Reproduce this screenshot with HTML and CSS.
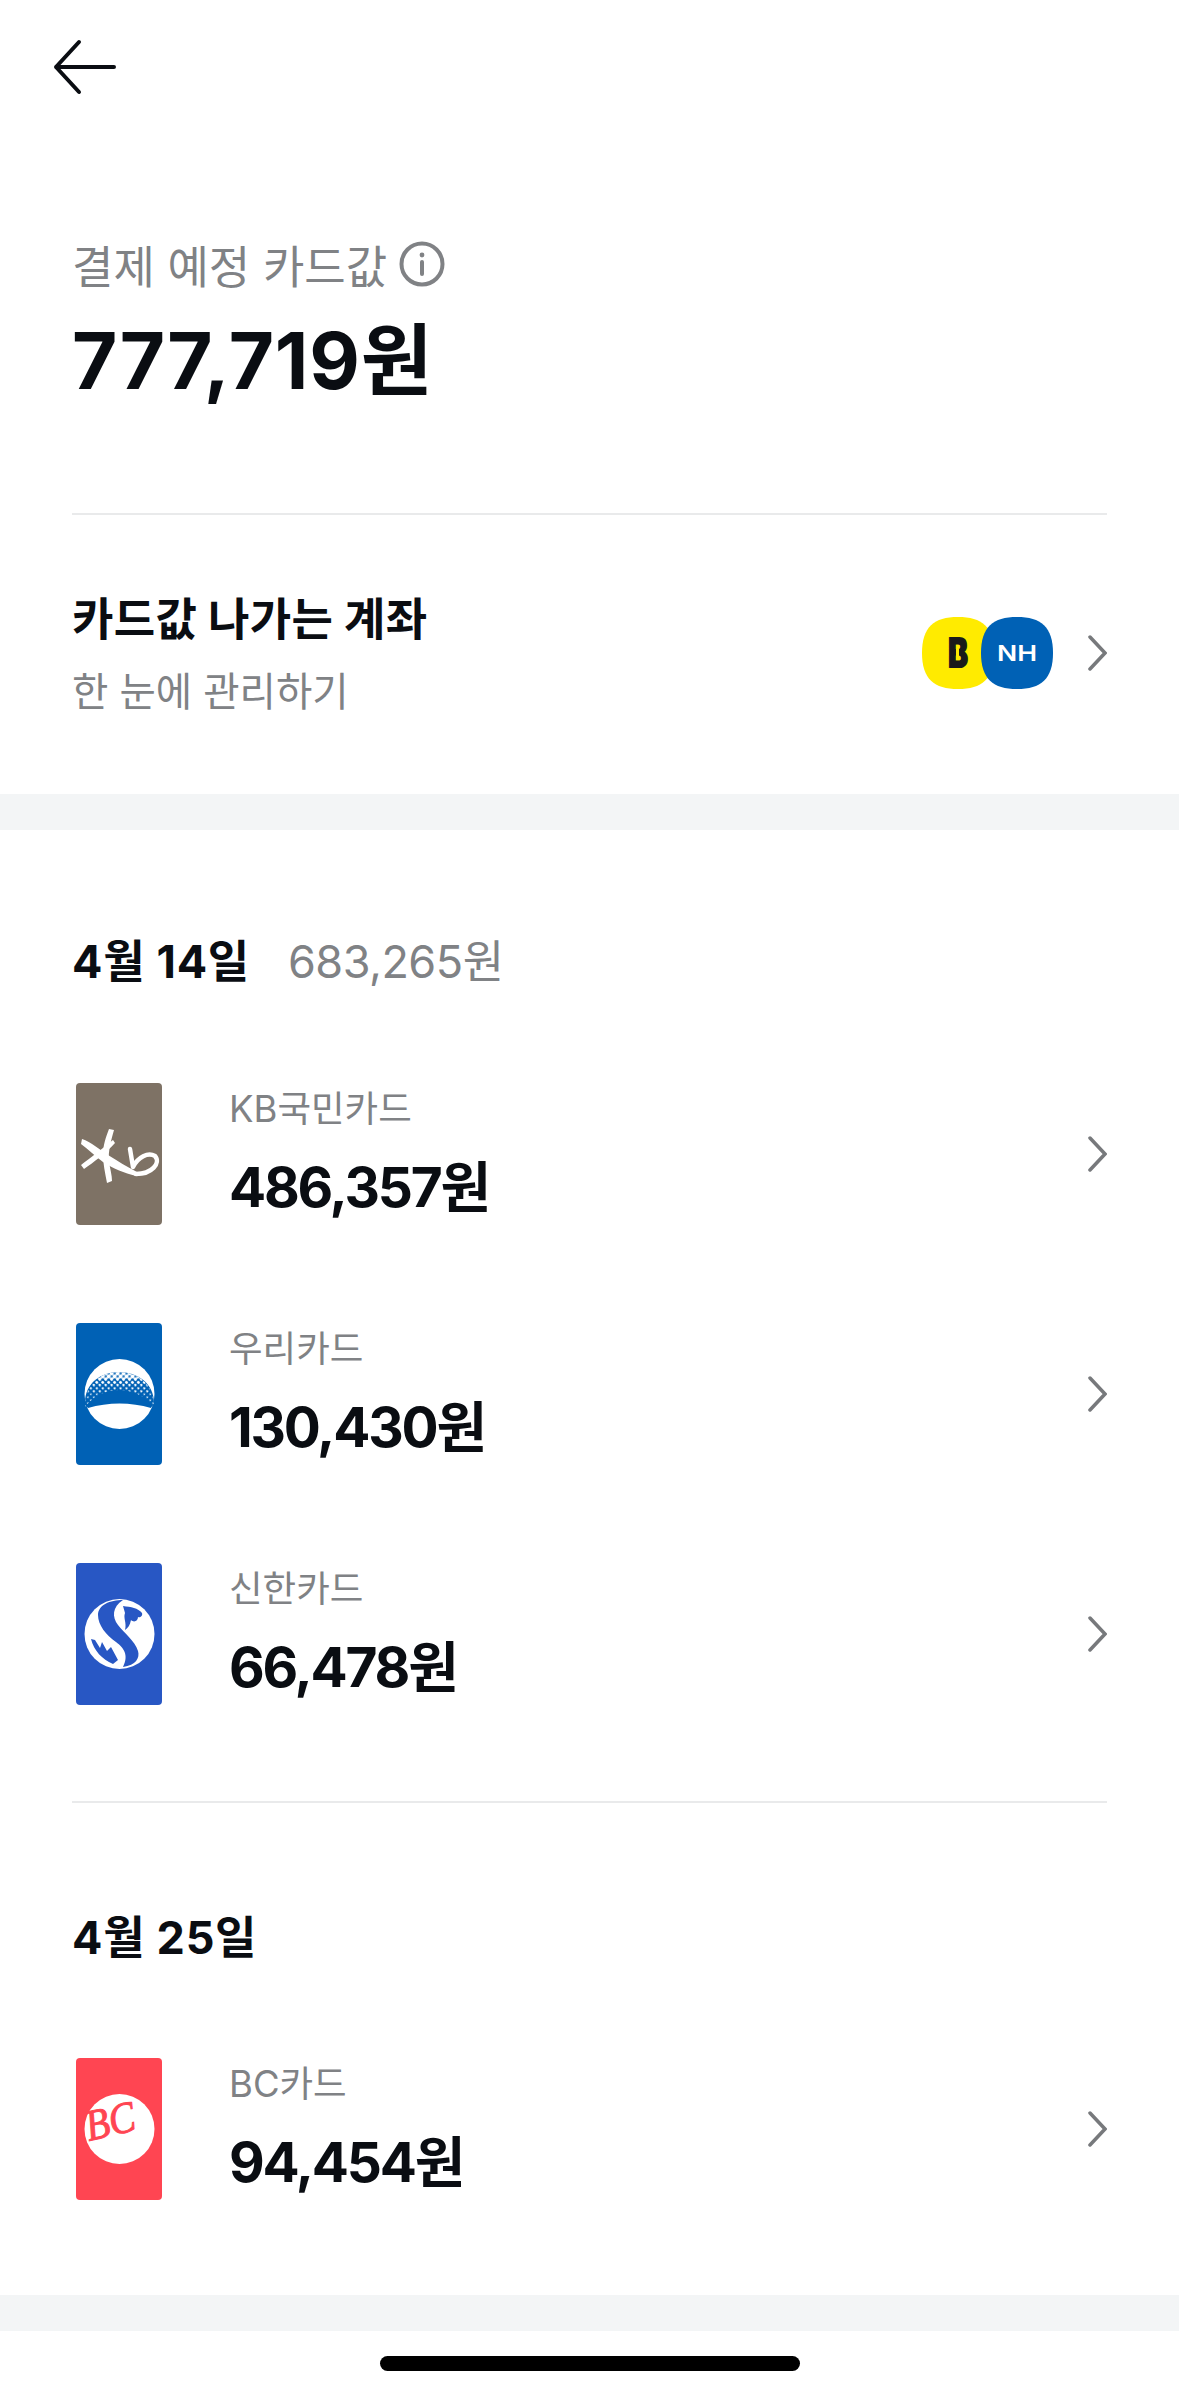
FILE: index.html
```html
<!DOCTYPE html>
<html lang="ko">

<head>
    <meta charset="UTF-8">
    <meta name="viewport" content="width=device-width, initial-scale=1.0">
    <title>결제 예정 카드값</title>
    <link rel="stylesheet" href="styles.css">
</head>

<body>
    <div class="topbar">
        <svg class="back" viewBox="0 0 64 56" width="64" height="56">
            <path d="M3 28H61M26 3L3 28L26 53" />
        </svg>
    </div>

    <div class="summary">
        <div class="label">
            <span>결제 예정 카드값</span>
            <svg class="info" viewBox="0 0 46 46" width="46" height="46">
                <circle cx="23" cy="23" r="20.5" />
                <path d="M23 21V33" />
                <circle class="dot" cx="23" cy="14" r="2.4" />
            </svg>
        </div>
        <div class="total">777,719원</div>
    </div>

    <div class="account">
        <div class="account-text">
            <div class="account-title">카드값 나가는 계좌</div>
            <div class="account-sub">한 눈에 관리하기</div>
        </div>
        <div class="account-right">
            <div class="banks">
                <svg class="bank" viewBox="0 0 72 72" width="72" height="72">
                    <path fill="#ffeb00" d="M36 0C60 0 72 10 72 36C72 62 60 72 36 72C12 72 0 62 0 36C0 10 12 0 36 0Z" />
                    <text class="bank-b" x="26" y="50" textLength="20" lengthAdjust="spacingAndGlyphs">B</text>
                    <rect x="34" y="32" width="3" height="11" fill="#ffeb00" />
                </svg>
                <svg class="bank bank-over" viewBox="0 0 72 72" width="72" height="72">
                    <path fill="#0061b5" d="M36 0C60 0 72 10 72 36C72 62 60 72 36 72C12 72 0 62 0 36C0 10 12 0 36 0Z" />
                    <text class="bank-nh" x="16" y="44" textLength="40" lengthAdjust="spacingAndGlyphs">NH</text>
                </svg>
            </div>
            <svg class="chevron" viewBox="0 0 24 38" width="24" height="38">
                <path d="M7 3L22 19L7 35" />
            </svg>
        </div>
    </div>

    <div class="band"></div>

    <div class="section first">
        <div class="date"><b>4월 14일</b><span class="date-sum">683,265원</span></div>

        <div class="card-row">
            <svg class="card" viewBox="0 0 86 142" width="86" height="142">
                <rect width="86" height="142" rx="4" fill="#7e7265" />
                <g fill="#fff">
                    <path d="M6 56C15 59 24 67 32 72C42 78 51 84 61 89L60 93C48 90 38 86 27 79C20 74 12 66 5 61Z" />
                    <path d="M5 82C14 75 26 66 37 57L39 60C30 70 18 79 8 86Z" />
                    <path d="M33 46L38 47C35 58 32 68 33 78C34 86 36 92 36 98L31 100C29 90 27 80 27 72C27 62 30 54 33 46Z" />
                </g>
                <path fill="none" stroke="#fff" stroke-width="4.5" stroke-linecap="round" stroke-linejoin="round" d="M54 66L57 84C62 74 72 69 79 73C85 80 76 91 60 91" />
            </svg>
            <div class="card-text">
                <div class="card-name">KB국민카드</div>
                <div class="card-amount">486,357원</div>
            </div>
            <svg class="chevron" viewBox="0 0 24 38" width="24" height="38">
                <path d="M7 3L22 19L7 35" />
            </svg>
        </div>

        <div class="card-row">
            <svg class="card" viewBox="0 0 86 142" width="86" height="142">
                <defs>
                    <pattern id="dots1" width="4.2" height="4.2" patternUnits="userSpaceOnUse" patternTransform="rotate(45)">
                        <circle cx="2.1" cy="2.1" r="2" fill="#fff" />
                    </pattern>
                    <pattern id="dots2" width="4.2" height="4.2" patternUnits="userSpaceOnUse" patternTransform="rotate(45)">
                        <circle cx="2.1" cy="2.1" r="1.5" fill="#fff" />
                    </pattern>
                    <pattern id="dots3" width="4.2" height="4.2" patternUnits="userSpaceOnUse" patternTransform="rotate(45)">
                        <circle cx="2.1" cy="2.1" r="1.1" fill="#fff" />
                    </pattern>
                    <pattern id="dots4" width="4.2" height="4.2" patternUnits="userSpaceOnUse" patternTransform="rotate(45)">
                        <circle cx="2.1" cy="2.1" r="0.8" fill="#fff" />
                    </pattern>
                    <clipPath id="dome">
                        <path d="M9 84C9 60 25 49 43 49C61 49 78 60 78 84C68 72 55 67 43 67C31 67 19 72 9 84Z" />
                    </clipPath>
                </defs>
                <rect width="86" height="142" rx="4" fill="#0061b5" />
                <circle cx="43.5" cy="71" r="35" fill="#fff" />
                <path fill="#0061b5" d="M9 80C9 60 25 49 43 49C61 49 78 60 78 80C78 82 75 84 75 85C55 79 32 79 12 85C11 84 9 82 9 80Z" />
                <g clip-path="url(#dome)">
                    <rect x="0" y="49" width="86" height="7" fill="url(#dots1)" />
                    <rect x="0" y="56" width="86" height="6" fill="url(#dots2)" />
                    <rect x="0" y="62" width="86" height="8" fill="url(#dots3)" />
                    <rect x="0" y="70" width="86" height="15" fill="url(#dots4)" />
                </g>
            </svg>
            <div class="card-text">
                <div class="card-name">우리카드</div>
                <div class="card-amount">130,430원</div>
            </div>
            <svg class="chevron" viewBox="0 0 24 38" width="24" height="38">
                <path d="M7 3L22 19L7 35" />
            </svg>
        </div>

        <div class="card-row">
            <svg class="card" viewBox="0 0 86 142" width="86" height="142">
                <rect width="86" height="142" rx="4" fill="#2857c4" />
                <circle cx="43.5" cy="71" r="35" fill="#fff" />
                <g fill="#2857c4">
                    <path d="M47 37C34 37 22 42 22 52C22 62 30 72 40 79C48 85 53 92 47 104C60 102 64 95 62 88C59 78 48 70 42 62C36 54 36 44 47 37Z" />
                    <path d="M47 43C55 44 62 45 66 50C67 53 64 55 62 54C62 58 58 60 55 57C54 62 52 65 49 67C51 60 47 55 49 50Z" />
                    <path d="M15 76L19 77L24 85L26 79L31 88L35 84L42 97L37 101C26 96 18 88 15 76Z" />
                </g>
            </svg>
            <div class="card-text">
                <div class="card-name">신한카드</div>
                <div class="card-amount">66,478원</div>
            </div>
            <svg class="chevron" viewBox="0 0 24 38" width="24" height="38">
                <path d="M7 3L22 19L7 35" />
            </svg>
        </div>
    </div>

    <div class="divider"></div>

    <div class="section second">
        <div class="date"><b>4월 25일</b></div>

        <div class="card-row">
            <svg class="card" viewBox="0 0 86 142" width="86" height="142">
                <rect width="86" height="142" rx="4" fill="#ff4552" />
                <circle cx="43.5" cy="71" r="35" fill="#fff" />
                <text class="bc" x="13" y="83" textLength="50" lengthAdjust="spacingAndGlyphs" transform="rotate(-13 13 83)">BC</text>
            </svg>
            <div class="card-text">
                <div class="card-name">BC카드</div>
                <div class="card-amount">94,454원</div>
            </div>
            <svg class="chevron" viewBox="0 0 24 38" width="24" height="38">
                <path d="M7 3L22 19L7 35" />
            </svg>
        </div>
    </div>

    <div class="band"></div>

    <div class="home-area">
        <div class="home-bar"></div>
    </div>
</body>

</html>
```

FILE: styles.css
```css
* {
    box-sizing: border-box;
}

body {
    margin: 0;
    background-color: #ffffff;
    color: #0a0d12;
    font-family: Inter, "Noto Sans CJK KR", sans-serif;
}

.topbar {
    height: 134px;
    padding: 39px 0 0 53px;
}

.back {
    display: block;
    fill: none;
    stroke: #0a0d12;
    stroke-width: 4;
    stroke-linecap: round;
    stroke-linejoin: round;
}

.summary {
    margin: 0 72px;
    height: 381px;
    padding-top: 102px;
    border-bottom: 2px solid #e9eaeb;
}

.label {
    display: flex;
    align-items: center;
    gap: 12px;
    height: 56px;
    font-size: 45px;
    color: #808285;
}

.info {
    fill: none;
    stroke: #808285;
    stroke-width: 4;
    stroke-linecap: round;
}

.info .dot {
    fill: #808285;
    stroke: none;
}

.total {
    margin-top: 29px;
    height: 80px;
    line-height: 80px;
    font-size: 78px;
    font-weight: 700;
    letter-spacing: 0.8px;
}

.account {
    display: flex;
    justify-content: space-between;
    align-items: center;
    height: 279px;
    margin: 0 72px;
}

.account-text {
    padding-bottom: 3px;
}

.account-title {
    height: 60px;
    line-height: 60px;
    font-size: 45px;
    font-weight: 700;
    letter-spacing: 0.3px;
}

.account-sub {
    margin-top: 17px;
    height: 50px;
    line-height: 50px;
    font-size: 39.5px;
    color: #808285;
}

.account-right {
    display: flex;
    align-items: center;
    gap: 30px;
    margin-bottom: 4px;
}

.banks {
    display: flex;
}

.bank {
    display: block;
}

.bank-over {
    margin-left: -13px;
}

.bank-b {
    font-size: 40px;
    font-weight: 800;
    fill: #1a1a1a;
    stroke: #1a1a1a;
    stroke-width: 2px;
}

.bank-nh {
    font-size: 22px;
    font-weight: 600;
    fill: #ffffff;
}

.chevron {
    display: block;
    fill: none;
    stroke: #77797c;
    stroke-width: 3.5;
    stroke-linecap: round;
    stroke-linejoin: miter;
    flex-shrink: 0;
}

.band {
    height: 36px;
    background-color: #f3f5f6;
}

.section {
    margin: 0 72px;
}

.section.first {
    padding-top: 98px;
}

.section.second {
    padding-top: 101px;
    padding-bottom: 46px;
}

.date {
    display: flex;
    align-items: center;
    gap: 38px;
    height: 60px;
    font-size: 45px;
}

.date-sum {
    color: #808285;
    letter-spacing: -0.5px;
}

.date b {
    letter-spacing: 0.7px;
}

.first .date {
    margin-bottom: 46px;
}

.second .date {
    margin-bottom: 45px;
}

.card-row {
    display: flex;
    align-items: center;
    height: 240px;
}

.card {
    display: block;
    margin-left: 4px;
    flex-shrink: 0;
}

.card-text {
    flex: 1;
    margin-left: 67px;
    padding-bottom: 3px;
}

.card-name {
    height: 50px;
    line-height: 50px;
    font-size: 36.5px;
    color: #808285;
}

.card-amount {
    margin-top: 18px;
    height: 70px;
    line-height: 70px;
    font-size: 55px;
    font-weight: 700;
    letter-spacing: -2.2px;
}

.bc {
    font-family: "Liberation Serif", serif;
    font-style: italic;
    font-size: 44px;
    fill: #ff4552;
    stroke: #ff4552;
    stroke-width: 1px;
}

.divider {
    margin: 47px 72px 0;
    height: 2px;
    background-color: #e9eaeb;
}

.home-area {
    height: 65px;
    padding-top: 25px;
}

.home-bar {
    width: 420px;
    height: 15px;
    margin: 0 auto;
    border-radius: 8px;
    background-color: #000000;
}
```
